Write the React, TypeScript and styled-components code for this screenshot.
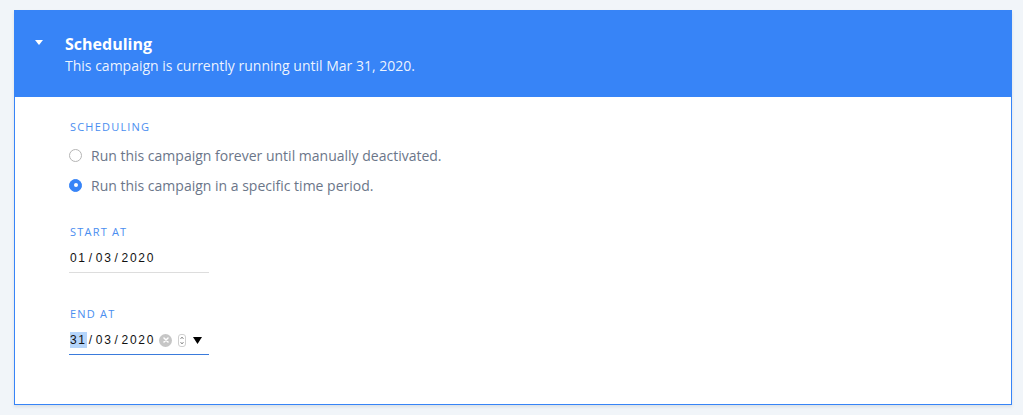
import React from "react";
import styled, { createGlobalStyle } from "styled-components";

const Global = createGlobalStyle`
  html, body { margin: 0; padding: 0; background: #f1f5f9; }
  body { font-family: "Open Sans", "Noto Sans", sans-serif; }
  * { box-sizing: border-box; }
`;

const Page = styled.div`
  padding: 10px 11px 0 14px;
  width: 1023px;
  height: 415px;
`;

const Card = styled.section`
  width: 998px;
  box-shadow: 0 2px 3px rgba(60, 80, 110, 0.12);
`;

const Header = styled.div`
  height: 87px;
  background: #3784f7;
  display: flex;
  align-items: flex-start;
  padding: 23px 0 0 21px;
  color: #fff;
`;

const Caret = styled.svg`
  width: 8px;
  height: 5px;
  margin-top: 7px;
  margin-right: 22px;
  flex: none;
`;

const HeadText = styled.div`
  display: flex;
  flex-direction: column;
`;

const Title = styled.div`
  font-size: 16px;
  font-weight: 700;
  line-height: 22px;
`;

const Subtitle = styled.div`
  font-size: 14px;
  line-height: 20px;
  margin-top: 1px;
  color: rgba(255, 255, 255, 0.92);
`;

const Body = styled.div`
  height: 308px;
  background: #fff;
  border: 1px solid #3784f7;
  border-top: none;
  padding: 23px 0 0 54px;
  display: flex;
  flex-direction: column;
`;

const Label = styled.div`
  font-size: 11px;
  letter-spacing: 1.2px;
  line-height: 14px;
  color: #4a8ef0;
  text-transform: uppercase;
  margin-left: 1px;
`;

const RadioRow = styled.label`
  display: flex;
  align-items: center;
  gap: 9px;
  height: 30px;
  font-size: 14px;
  color: #6b7689;
`;

const RadioDot = styled.span<{ $on?: boolean }>`
  width: 13px;
  height: 13px;
  border-radius: 50%;
  flex: none;
  display: flex;
  align-items: center;
  justify-content: center;
  background: ${(p) => (p.$on ? "#3784f7" : "#fff")};
  border: 1px solid ${(p) => (p.$on ? "#3784f7" : "#b5b5b5")};
  &::after {
    content: "";
    display: ${(p) => (p.$on ? "block" : "none")};
    width: 4px;
    height: 4px;
    border-radius: 50%;
    background: #fff;
  }
`;

const Radios = styled.div`
  margin-top: 6px;
  display: flex;
  flex-direction: column;
`;

const Field = styled.div<{ $top: number }>`
  margin-top: ${(p) => p.$top}px;
  display: flex;
  flex-direction: column;
`;

const DateBox = styled.div<{ $focus?: boolean }>`
  width: 140px;
  height: 29px;
  margin-top: 5px;
  border-bottom: 1px solid ${(p) => (p.$focus ? "#3a7bdc" : "#dddddd")};
  display: flex;
  align-items: center;
  padding-left: 1px;
  font-family: "Liberation Sans", Arial, sans-serif;
  font-size: 12px;
  letter-spacing: 1.7px;
  color: #111;
`;

const Seg = styled.span<{ $sel?: boolean }>`
  background: ${(p) => (p.$sel ? "#b5d5fb" : "transparent")};
  line-height: 16px;
`;

const Sep = styled.span`
  margin: 0 2px;
`;

const Clear = styled.span`
  width: 13px;
  height: 13px;
  border-radius: 50%;
  background: #c6c6c6;
  margin-left: 4px;
  flex: none;
  display: flex;
  align-items: center;
  justify-content: center;
`;

const Spinner = styled.span`
  width: 8px;
  height: 13px;
  border: 1px solid #cfcfcf;
  border-radius: 3px;
  margin-left: 6px;
  flex: none;
  display: flex;
  align-items: center;
  justify-content: center;
`;

const Drop = styled.svg`
  width: 9px;
  height: 7px;
  margin-left: 7px;
  flex: none;
`;

export default function App() {
  return (
    <>
      <Global />
      <Page>
        <Card>
          <Header>
            <Caret viewBox="0 0 8 5">
              <path d="M0 0 L8 0 L4 5 Z" fill="#fff" />
            </Caret>
            <HeadText>
              <Title>Scheduling</Title>
              <Subtitle>This campaign is currently running until Mar 31, 2020.</Subtitle>
            </HeadText>
          </Header>
          <Body>
            <Label>Scheduling</Label>
            <Radios>
              <RadioRow>
                <RadioDot />
                Run this campaign forever until manually deactivated.
              </RadioRow>
              <RadioRow>
                <RadioDot $on />
                Run this campaign in a specific time period.
              </RadioRow>
            </Radios>
            <Field $top={25}>
              <Label>Start at</Label>
              <DateBox>
                <Seg>01</Seg>
                <Sep>/</Sep>
                <Seg>03</Seg>
                <Sep>/</Sep>
                <Seg>2020</Seg>
              </DateBox>
            </Field>
            <Field $top={34}>
              <Label>End at</Label>
              <DateBox $focus>
                <Seg $sel>31</Seg>
                <Sep>/</Sep>
                <Seg>03</Seg>
                <Sep>/</Sep>
                <Seg>2020</Seg>
                <Clear>
                  <svg width="6" height="6" viewBox="0 0 6 6">
                    <path d="M1 1 L5 5 M5 1 L1 5" stroke="#fff" strokeWidth="1.5" strokeLinecap="round" />
                  </svg>
                </Clear>
                <Spinner>
                  <svg width="4" height="9" viewBox="0 0 4 9">
                    <path d="M0.5 3 L2 1 L3.5 3 M0.5 6 L2 8 L3.5 6" stroke="#777" strokeWidth="0.8" fill="none" />
                  </svg>
                </Spinner>
                <Drop viewBox="0 0 9 7">
                  <path d="M0 0 L9 0 L4.5 7 Z" fill="#000" />
                </Drop>
              </DateBox>
            </Field>
          </Body>
        </Card>
      </Page>
    </>
  );
}
